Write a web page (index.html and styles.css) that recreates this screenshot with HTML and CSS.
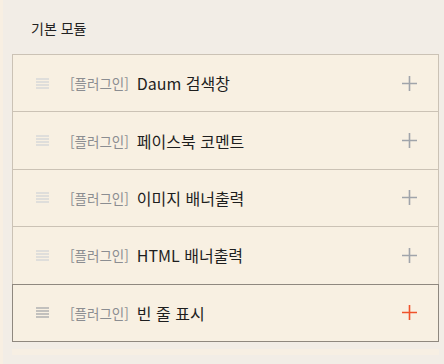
FILE: index.html
```html
<!DOCTYPE html>
<html lang="ko">

<head>
    <meta charset="UTF-8">
    <meta name="viewport" content="width=device-width, initial-scale=1.0">
    <title>기본 모듈</title>
    <link rel="stylesheet" href="styles.css">
</head>

<body>

    <div class="panel">
        <h2 class="panel-title">기본 모듈</h2>

        <ul class="module-list">
            <li class="module">
                <span class="handle"><svg width="13" height="11" viewBox="0 0 13 11"><path d="M0 1h13M0 4h13M0 7h13M0 10h13" /></svg></span>
                <span class="module-tag">[플러그인]</span>
                <span class="module-name">Daum 검색창</span>
                <span class="add"><svg width="15" height="15" viewBox="0 0 15 15"><path d="M7.5 0v15M0 7.5h15" /></svg></span>
            </li>
            <li class="module">
                <span class="handle"><svg width="13" height="11" viewBox="0 0 13 11"><path d="M0 1h13M0 4h13M0 7h13M0 10h13" /></svg></span>
                <span class="module-tag">[플러그인]</span>
                <span class="module-name">페이스북 코멘트</span>
                <span class="add"><svg width="15" height="15" viewBox="0 0 15 15"><path d="M7.5 0v15M0 7.5h15" /></svg></span>
            </li>
            <li class="module">
                <span class="handle"><svg width="13" height="11" viewBox="0 0 13 11"><path d="M0 1h13M0 4h13M0 7h13M0 10h13" /></svg></span>
                <span class="module-tag">[플러그인]</span>
                <span class="module-name">이미지 배너출력</span>
                <span class="add"><svg width="15" height="15" viewBox="0 0 15 15"><path d="M7.5 0v15M0 7.5h15" /></svg></span>
            </li>
            <li class="module">
                <span class="handle"><svg width="13" height="11" viewBox="0 0 13 11"><path d="M0 1h13M0 4h13M0 7h13M0 10h13" /></svg></span>
                <span class="module-tag">[플러그인]</span>
                <span class="module-name">HTML 배너출력</span>
                <span class="add"><svg width="15" height="15" viewBox="0 0 15 15"><path d="M7.5 0v15M0 7.5h15" /></svg></span>
            </li>
            <li class="module active">
                <span class="handle"><svg width="13" height="11" viewBox="0 0 13 11"><path d="M0 1h13M0 4h13M0 7h13M0 10h13" /></svg></span>
                <span class="module-tag">[플러그인]</span>
                <span class="module-name">빈 줄 표시</span>
                <span class="add"><svg width="15" height="15" viewBox="0 0 15 15"><path d="M7.5 0v15M0 7.5h15" /></svg></span>
            </li>
        </ul>

        <div class="next-section"></div>
    </div>

</body>

</html>
```

FILE: styles.css
```css
body {
    font-family: "Noto Sans CJK KR", "Noto Sans", sans-serif;
    margin: 0;
    padding: 0;
    background-color: #f8efe2;
    color: #222;
}

.panel {
    margin-left: 3px;
    min-height: 364px;
    background-color: #f2ede6;
    padding: 0 5px 0 9px;
    overflow: hidden;
}

.panel-title {
    margin: 18px 0 16px 19px;
    font-size: 14px;
    font-weight: normal;
    line-height: 20px;
}

.module-list {
    list-style: none;
    margin: 0;
    padding: 0;
}

.module {
    display: flex;
    align-items: center;
    height: 58.4px;
    box-sizing: border-box;
    padding: 0 21px 0 23px;
    background-color: #f8f0e2;
    border: 1px solid #cbc2b5;
    margin-top: -1px;
    position: relative;
}

.module:first-child {
    margin-top: 0;
}

.module.active {
    border-color: #8f887f;
    z-index: 1;
}

.handle {
    display: flex;
    margin-right: 21px;
}

.handle svg {
    stroke: #c6ccd4;
    stroke-width: 1;
    fill: none;
}

.module.active .handle svg {
    stroke: #8c9199;
}

.module-tag {
    font-size: 13.5px;
    color: #8b8d91;
    margin-right: 8px;
}

.module-name {
    font-size: 16px;
    color: #1e1e1e;
    flex: 1;
}

.add {
    display: flex;
}

.add svg {
    stroke: #a0a4aa;
    stroke-width: 1.6;
    fill: none;
}

.module.active .add svg {
    stroke: #f0522a;
}

.next-section {
    margin-top: 7px;
    height: 6px;
    background-color: #f7efe3;
}
```
